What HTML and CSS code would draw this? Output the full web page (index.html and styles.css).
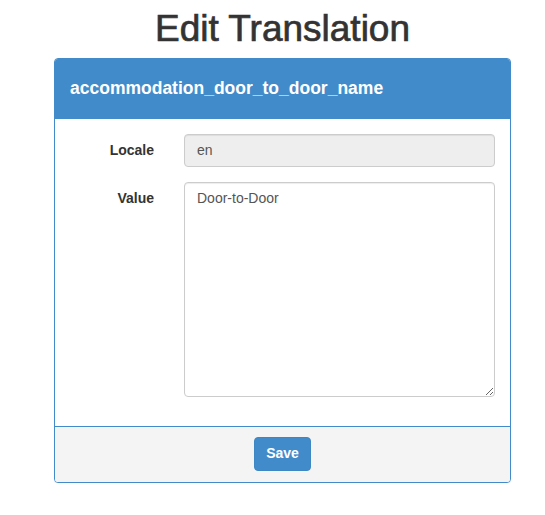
FILE: index.html
```html
<!DOCTYPE html>
<html>
<head>
<meta charset="utf-8">
<link rel="stylesheet" href="styles.css">
</head>
<body>
<div class="page">
  <h1 class="title">Edit Translation</h1>
  <div class="panel">
    <div class="panel-heading">accommodation_door_to_door_name</div>
    <div class="panel-body">
      <div class="form-row">
        <label class="form-label">Locale</label>
        <div class="form-control disabled">en</div>
      </div>
      <div class="form-row">
        <label class="form-label">Value</label>
        <textarea class="form-control textarea">Door-to-Door</textarea>
      </div>
    </div>
    <div class="panel-footer">
      <button class="btn">Save</button>
    </div>
  </div>
</div>
</body>
</html>
```
FILE: styles.css
```css
* { box-sizing: border-box; }
html, body { margin: 0; padding: 0; background: #fff; }
body {
  font-family: "Liberation Sans", Arial, Helvetica, sans-serif;
  font-size: 14px;
  line-height: 1.42857;
  color: #333;
}
.page {
  width: 457px;
  margin-left: 54px;
}
.title {
  margin: 0 0 8px;
  padding-top: 9px;
  font-size: 37px;
  font-weight: 500;
  line-height: 1.1;
  text-align: center;
  color: #333;
  -webkit-text-stroke: 0.7px #333;
}
.panel {
  border: 1px solid #428bca;
  border-radius: 4px;
  background: #fff;
  box-shadow: 0 1px 1px rgba(0,0,0,.05);
}
.panel-heading {
  background: #428bca;
  color: #fff;
  font-size: 17.5px;
  font-weight: bold;
  padding: 19px 15px 19px;
  line-height: 21px;
  border-top-left-radius: 3px;
  border-top-right-radius: 3px;
  border-bottom: 1px solid #428bca;
}
.panel-body {
  padding: 15px 15px 0;
}
.form-row {
  display: grid;
  grid-template-columns: 84px 1fr;
  column-gap: 30px;
  margin-bottom: 15px;
}
.form-label {
  text-align: right;
  font-weight: bold;
  padding-top: 7px;
}
.form-control {
  display: block;
  width: 100%;
  height: 33px;
  padding: 6px 12px;
  font-family: inherit;
  font-size: 14px;
  line-height: 1.42857;
  color: #555;
  background: #fff;
  border: 1px solid #ccc;
  border-radius: 4px;
  box-shadow: inset 0 1px 1px rgba(0,0,0,.075);
}
.form-control.disabled {
  background: #eee;
}
.textarea {
  height: 215px;
  margin: 0;
  resize: vertical;
}
.panel-body .form-row:last-child {
  margin-bottom: 29px;
}
.panel-footer {
  background: #f4f4f4;
  border-top: 1px solid #428bca;
  border-bottom-left-radius: 3px;
  border-bottom-right-radius: 3px;
  padding: 10px 15px 11px;
  text-align: center;
}
.btn {
  display: inline-block;
  background: #428bca;
  border: 1px solid #3d87c4;
  border-radius: 4px;
  color: #fff;
  font-family: inherit;
  font-size: 14px;
  font-weight: bold;
  line-height: 1.42857;
  padding: 6px 11px;
  height: 34px;
}
```
